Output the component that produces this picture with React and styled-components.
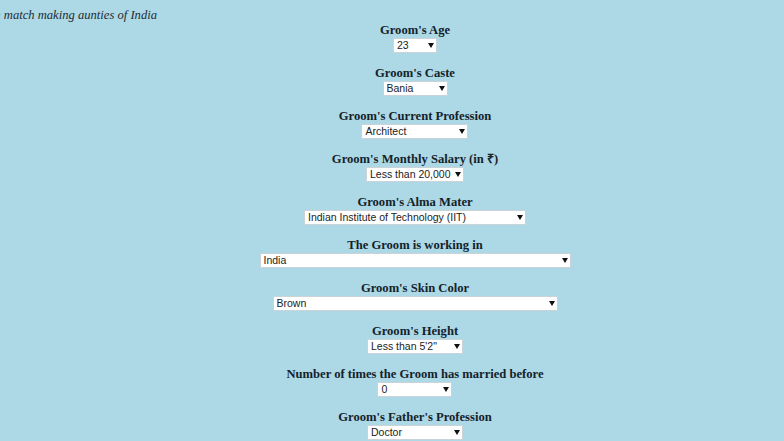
import React from 'react';
import styled, { createGlobalStyle } from 'styled-components';

const GlobalStyle = createGlobalStyle`
  html, body {
    margin: 0;
    padding: 0;
    background: #add8e6;
    overflow: hidden;
  }
`;

const Page = styled.div`
  width: 830px;
  min-height: 441px;
  padding-top: 8px;
  background: #add8e6;
`;

const Tagline = styled.div`
  display: flex;
  justify-content: flex-end;
  width: 157px;
  white-space: nowrap;
  font-family: "Liberation Serif", serif;
  font-style: italic;
  font-size: 12.6px;
  line-height: 15px;
  color: #1e2b33;
`;

const Form = styled.form`
  display: flex;
  flex-direction: column;
  align-items: center;
`;

const Field = styled.div`
  display: flex;
  flex-direction: column;
  align-items: center;
  margin-bottom: 13px;
`;

const Label = styled.label`
  font-family: "Liberation Serif", serif;
  font-weight: bold;
  font-size: 12.6px;
  line-height: 15px;
  color: #14222a;
`;

const SelectBox = styled.div`
  position: relative;
  width: ${(props) => props.width}px;
  height: 15px;
  box-sizing: border-box;
  background: #fff;
  border: 1px solid #c9d3d8;
`;

const Select = styled.select`
  appearance: none;
  display: block;
  width: 100%;
  height: 13px;
  margin: 0;
  padding: 0 0 0 3px;
  border: none;
  outline: none;
  background: transparent;
  font-family: "Liberation Sans", Arial, sans-serif;
  font-size: 10.5px;
  line-height: 13px;
  color: #222;
`;

const Caret = styled.span`
  position: absolute;
  right: 2px;
  top: 4px;
  width: 0;
  height: 0;
  border-left: 3px solid transparent;
  border-right: 3px solid transparent;
  border-top: 5px solid #111;
  pointer-events: none;
`;

const fields = [
  { label: "Groom's Age", value: '23', width: 44 },
  { label: "Groom's Caste", value: 'Bania', width: 65 },
  { label: "Groom's Current Profession", value: 'Architect', width: 107 },
  { label: "Groom's Monthly Salary (in \u20B9)", value: 'Less than 20,000', width: 98 },
  { label: "Groom's Alma Mater", value: 'Indian Institute of Technology (IIT)', width: 222 },
  { label: 'The Groom is working in', value: 'India', width: 311 },
  { label: "Groom's Skin Color", value: 'Brown', width: 285 },
  { label: "Groom's Height", value: 'Less than 5\'2"', width: 96 },
  { label: 'Number of times the Groom has married before', value: '0', width: 75 },
  { label: "Groom's Father's Profession", value: 'Doctor', width: 96 },
];

const App = () => (
  <Page>
    <GlobalStyle />
    <Tagline>Indian match making aunties of India</Tagline>
    <Form>
      {fields.map((field) => (
        <Field key={field.label}>
          <Label>{field.label}</Label>
          <SelectBox width={field.width}>
            <Select defaultValue={field.value}>
              <option>{field.value}</option>
            </Select>
            <Caret />
          </SelectBox>
        </Field>
      ))}
    </Form>
  </Page>
);

export default App;
